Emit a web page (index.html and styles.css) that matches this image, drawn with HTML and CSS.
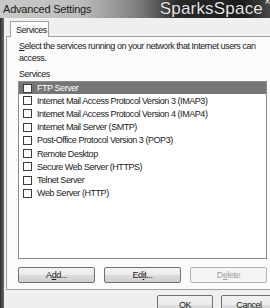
FILE: index.html
```html
<!DOCTYPE html>
<html lang="en">
<head>
    <meta charset="UTF-8">
    <title>Advanced Settings</title>
    <link rel="stylesheet" href="styles.css">
</head>
<body>
    <div class="window">
        <div class="titlebar">
            <span class="title">Advanced Settings</span>
            <span class="brand">SparksSpace</span>
            <span class="close">&#215;</span>
        </div>
        <div class="frame">
            <div class="edge"></div>
            <div class="dialog">
                <div class="tabs">
                    <div class="tab">Services</div>
                </div>
                <div class="panel">
                    <p class="intro"><span class="key">S</span>elect the services running on your network that Internet users can access.</p>
                    <div class="list-label">Services</div>
                    <ul class="list">
                        <li class="selected"><span class="check"></span>FTP Server</li>
                        <li><span class="check"></span>Internet Mail Access Protocol Version 3 (IMAP3)</li>
                        <li><span class="check"></span>Internet Mail Access Protocol Version 4 (IMAP4)</li>
                        <li><span class="check"></span>Internet Mail Server (SMTP)</li>
                        <li><span class="check"></span>Post-Office Protocol Version 3 (POP3)</li>
                        <li><span class="check"></span>Remote Desktop</li>
                        <li><span class="check"></span>Secure Web Server (HTTPS)</li>
                        <li><span class="check"></span>Telnet Server</li>
                        <li><span class="check"></span>Web Server (HTTP)</li>
                    </ul>
                    <div class="actions">
                        <button>A<span class="key">d</span>d...</button>
                        <button>Ed<span class="key">i</span>t...</button>
                        <button disabled>D<span class="key">e</span>lete</button>
                    </div>
                </div>
                <div class="footer">
                    <button class="wide">OK</button>
                    <button class="wide">Cancel</button>
                </div>
            </div>
        </div>
    </div>
</body>
</html>
```

FILE: styles.css
```css
body {
    margin: 0;
    width: 270px;
    height: 308px;
    overflow: hidden;
    font-family: "Liberation Sans", Arial, sans-serif;
    font-size: 9px;
    letter-spacing: -0.45px;
    color: #1a1a1a;
    background: #3a3a3a;
}
.key {
    text-decoration: underline;
}
.window {
    display: flex;
    flex-direction: column;
    height: 308px;
}
.titlebar {
    height: 18px;
    display: flex;
    align-items: center;
    padding-left: 3px;
    background: linear-gradient(to right, #c9c9c9 0%, #bdbdbd 30%, #7a7a7a 52%, #2a2a2a 66%, #1c1c1c 90%, #4a4a4a 100%);
    position: relative;
}
.title {
    font-size: 11px;
    letter-spacing: -0.2px;
    color: #1a1a1a;
}
.brand {
    margin-left: auto;
    margin-right: 7px;
    font-size: 17px;
    letter-spacing: 0.2px;
    color: #e6e6e6;
    text-shadow: 0 0 1px #000;
}
.close {
    position: absolute;
    right: 0;
    top: -4px;
    font-size: 10px;
    color: #fff;
}
.frame {
    flex: 1;
    display: flex;
}
.edge {
    width: 4px;
    background: linear-gradient(to right, #2e2e2e, #6a6a6a);
}
.dialog {
    flex: 1;
    background: #efefef;
    overflow: hidden;
    padding-top: 3px;
}
.tabs {
    display: flex;
    padding-left: 6px;
    height: 15px;
}
.tab {
    width: 39px;
    border: 1px solid #a0a0a0;
    border-bottom: none;
    background: #fbfbfb;
    padding: 3px 0 0 5px;
    box-sizing: border-box;
    position: relative;
    z-index: 1;
    height: 16px;
}
.panel {
    margin-left: 2px;
    width: 267px;
    box-sizing: border-box;
    border: 1px solid #a0a0a0;
    background: #fbfbfb;
    padding: 3px 5px 6px 11px;
}
.intro {
    margin: 0;
    padding-left: 1px;
    line-height: 12px;
    width: 240px;
}
.list-label {
    padding-left: 1px;
    margin-top: 4px;
    line-height: 12px;
}
.list {
    list-style: none;
    margin: 1px 0 0;
    padding: 0;
    height: 178px;
    border: 1px solid #8a8a8a;
    background: #fff;
    box-sizing: border-box;
}
.list li {
    height: 13.25px;
    display: flex;
    align-items: center;
    padding-left: 4px;
    white-space: nowrap;
}
.list li.selected {
    background: #767676;
    color: #fff;
    height: 12px;
}
.check {
    width: 9px;
    height: 9px;
    border: 1px solid #3c3c3c;
    background: #fff;
    box-sizing: border-box;
    margin-right: 5px;
    flex-shrink: 0;
}
.actions {
    display: grid;
    grid-template-columns: repeat(3, 1fr);
    gap: 9px;
    margin-top: 8px;
}
button {
    font-family: inherit;
    font-size: 9px;
    letter-spacing: inherit;
    height: 16px;
    padding: 0;
    border: 1px solid #707070;
    border-radius: 2px;
    background: linear-gradient(#f2f2f2 0%, #ebebeb 50%, #dcdcdc 51%, #cfcfcf 100%);
    color: #1a1a1a;
}
button:disabled {
    border-color: #b5b5b5;
    background: #f4f4f4;
    color: #a0a0a0;
}
.footer {
    display: flex;
    justify-content: flex-end;
    gap: 8px;
    padding-top: 5px;
    margin-right: -7px;
}
.wide {
    width: 56px;
    height: 20px;
}
```
